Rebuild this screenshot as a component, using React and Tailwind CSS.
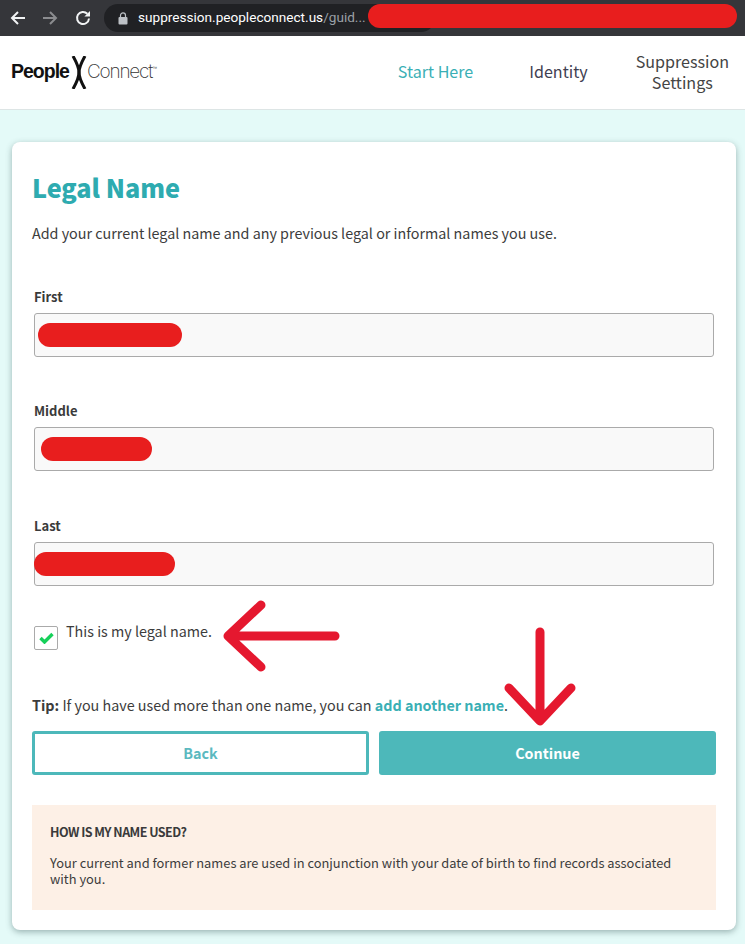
import React from "react";

const font = { fontFamily: '"Noto Sans CJK SC", "Noto Sans", sans-serif' };

function Logo() {
  return (
    <div className="flex items-center">
      <span className="font-['Liberation_Sans',sans-serif] font-bold text-[19.5px] tracking-[-1px] text-[#111] -mt-[1px]">People</span>
      <svg width="16" height="33" viewBox="0 0 16 33" className="ml-[2px]">
        <path d="M2 0 C7 9 8 13 8 16.5 C8 20 7 24 2 33" fill="none" stroke="#111" strokeWidth="3" />
        <path d="M14 0 C9 9 8 13 8 16.5 C8 20 9 24 14 33" fill="none" stroke="#111" strokeWidth="3" />
      </svg>
      <span className="font-['Inter',sans-serif] font-extralight text-[19px] tracking-[-1.2px] text-[#333]">Connect</span>
      <span className="font-['Liberation_Sans',sans-serif] text-[5px] leading-none text-[#555] mb-[8px]">™</span>
    </div>
  );
}

function Field({ label, redact, mt }) {
  return (
    <div className={mt}>
      <label className="block text-[13px] leading-[18px] font-bold text-[#3a3a3a] mb-[7px]">{label}</label>
      <div className="relative h-[44px] rounded-[3px] border border-[#aaa] bg-[#f9f9f9]">
        <div className={`absolute rounded-full bg-[#e81e1e] ${redact}`}></div>
      </div>
    </div>
  );
}

export default function App() {
  return (
    <div style={font} className="relative w-[745px] h-[944px] overflow-hidden bg-[#e4faf8] text-[#3c3c3c]">
      {/* browser bar */}
      <div className="h-[36px] bg-[#35363a] flex items-center pl-[10px]">
        <svg width="16" height="16" viewBox="0 0 16 16" fill="none" stroke="#f1f3f4" strokeWidth="2">
          <path d="M15 8H2M8 2 2 8l6 6" />
        </svg>
        <svg width="16" height="16" viewBox="0 0 16 16" fill="none" stroke="#8b8c8f" strokeWidth="2" className="ml-[16px]">
          <path d="M1 8h13M8 2l6 6-6 6" />
        </svg>
        <svg width="16" height="16" viewBox="0 0 16 16" fill="none" stroke="#f1f3f4" strokeWidth="2" className="ml-[17px]">
          <path d="M14 8.5a6 6 0 1 1-1.7-4.7" />
          <path d="M15 1v5.6H9.4z" fill="#f1f3f4" stroke="none" />
        </svg>
        <div className="ml-[13px] w-[331px] h-[28px] rounded-full bg-[#202124] flex items-center pl-[14px]">
          <svg width="10" height="13" viewBox="0 0 10 13" fill="#bdc1c6">
            <rect x="0.5" y="5" width="9" height="7.5" rx="1" />
            <path d="M2.5 5V3.4a2.5 2.5 0 0 1 5 0V5" fill="none" stroke="#bdc1c6" strokeWidth="1.2" />
          </svg>
          <span className="ml-[10px] text-[13.6px] leading-none font-['Roboto',sans-serif] whitespace-nowrap text-white">
            suppression.peopleconnect.us<span className="text-[#9aa0a6]">/guid...</span>
          </span>
        </div>
      </div>
      <div className="absolute left-[368px] top-[4px] w-[369px] h-[24px] rounded-full bg-[#e81e1e]"></div>

      {/* site header */}
      <header className="h-[74px] bg-white border-b border-[#dde5e5] flex items-center pl-[11px]">
        <Logo />
        <nav className="ml-auto mb-[2px] flex items-center text-[16.1px] leading-[21px]">
          <span className="text-[#3aafb5]">Start Here</span>
          <span className="ml-[56px] text-[#3f4052]">Identity</span>
          <span className="ml-[48px] mr-[16px] text-center text-[#444]">Suppression<br />Settings</span>
        </nav>
      </header>

      {/* card */}
      <main className="mt-[32px] ml-[12px] mr-[9px] h-[788px] rounded-lg bg-white shadow-[0_2px_6px_rgba(60,90,90,0.45)] px-[20px] pt-[26px]">
        <h1 className="text-[25.2px] leading-[38px] font-black text-[#2eabb0]">Legal Name</h1>
        <p className="mt-[17px] text-[14.33px] leading-[20px]">
          Add your current legal name and any previous legal or informal names you use.
        </p>

        <div className="px-[2px] mt-[45px]">
          <Field label="First" redact="left-[3px] top-[9px] w-[144px] h-[24px]" />
          <Field label="Middle" mt="mt-[45px]" redact="left-[6px] top-[9px] w-[111px] h-[24px]" />
          <Field label="Last" mt="mt-[46px]" redact="left-[-1px] top-[9px] w-[141px] h-[24px]" />
        </div>

        <div className="mt-[40px] ml-[2px] flex items-start">
          <div className="w-[24px] h-[24px] rounded-[2px] border border-[#aaa] bg-white flex items-center justify-center">
            <svg width="15" height="12" viewBox="0 0 15 12" fill="none" stroke="#16d05a" strokeWidth="3.4">
              <path d="M1.5 6 5.5 10 13.5 2" />
            </svg>
          </div>
          <span className="ml-[8px] text-[14.33px] leading-[20px] -mt-[5px]">This is my legal name.</span>
        </div>

        <p className="mt-[45px] text-[14.33px] leading-[20px]">
          <b>Tip:</b> If you have used more than one name, you can{" "}
          <b className="text-[#3aafb5]">add another name</b>.
        </p>

        <div className="mt-[16px] grid grid-cols-2 gap-[10px]">
          <button className="h-[44px] rounded-[3px] border-[3px] border-[#4db8ba] bg-white text-[14.33px] font-bold text-[#5bb9bf]">Back</button>
          <button className="h-[44px] rounded-[3px] bg-[#4db8ba] text-[14.33px] font-bold text-white">Continue</button>
        </div>

        <section className="mt-[30px] h-[105px] bg-[#fdf0e6] px-[18px] pt-[18px]">
          <h2 className="text-[12.5px] leading-[18px] font-bold tracking-[-0.55px] text-[#3a3a3a]">HOW IS MY NAME USED?</h2>
          <p className="mt-[14px] text-[12.87px] leading-[16px]">
            Your current and former names are used in conjunction with your date of birth to find records associated with you.
          </p>
        </section>
      </main>

      {/* annotation arrows */}
      <svg className="absolute left-0 top-0 pointer-events-none" width="745" height="944" fill="none" stroke="#e5182f" strokeWidth="9" strokeLinecap="round" strokeLinejoin="round">
        <path d="M335 636H232M261 605 228 636 261 667" />
        <path d="M540 632V720M509 688 540 721 571 688" />
      </svg>
    </div>
  );
}
